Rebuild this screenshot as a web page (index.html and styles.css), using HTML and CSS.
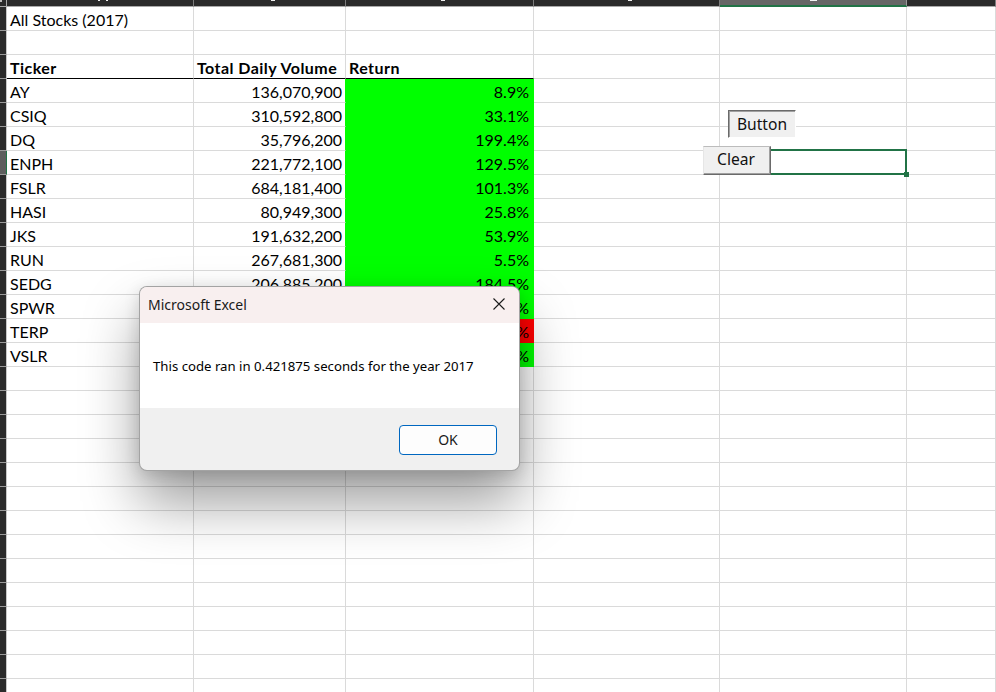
FILE: index.html
```html
<!DOCTYPE html>
<html>
<head>
<meta charset="utf-8">
<title>All Stocks (2017)</title>
<link rel="stylesheet" href="styles.css">
</head>
<body>
<div class="sheet">
  <div class="row top">
    <div class="ch corner"><span class="selall"></span></div>
    <div class="ch"><span class="mk mk-a"></span></div>
    <div class="ch"><span class="mk"></span></div>
    <div class="ch"><span class="mk"></span></div>
    <div class="ch"><span class="mk"></span></div>
    <div class="ch colsel"><span class="mk mk-e"></span></div>
    <div class="ch"></div>
  </div>
  <div class="row"><div class="rh"></div><div class="c">All Stocks (2017)</div><div class="c"></div><div class="c"></div><div class="c"></div><div class="c"></div><div class="c"></div></div>
  <div class="row"><div class="rh"></div><div class="c"></div><div class="c"></div><div class="c"></div><div class="c"></div><div class="c"></div><div class="c"></div></div>
  <div class="row"><div class="rh"></div><div class="c hd">Ticker</div><div class="c hd">Total Daily Volume</div><div class="c hd">Return</div><div class="c"></div><div class="c"></div><div class="c"></div></div>
  <div class="row"><div class="rh"></div><div class="c">AY</div><div class="c num fb">136,070,900</div><div class="c num g">8.9%</div><div class="c"></div><div class="c"></div><div class="c"></div></div>
  <div class="row"><div class="rh"></div><div class="c">CSIQ</div><div class="c num fb">310,592,800</div><div class="c num g">33.1%</div><div class="c"></div><div class="c"></div><div class="c"></div></div>
  <div class="row"><div class="rh"></div><div class="c">DQ</div><div class="c num fb">35,796,200</div><div class="c num g">199.4%</div><div class="c"></div><div class="c"></div><div class="c"></div></div>
  <div class="row"><div class="rh rsel"></div><div class="c">ENPH</div><div class="c num fb">221,772,100</div><div class="c num g">129.5%</div><div class="c"></div><div class="c active"><span class="handle"></span></div><div class="c"></div></div>
  <div class="row"><div class="rh"></div><div class="c">FSLR</div><div class="c num fb">684,181,400</div><div class="c num g">101.3%</div><div class="c"></div><div class="c"></div><div class="c"></div></div>
  <div class="row"><div class="rh"></div><div class="c">HASI</div><div class="c num fb">80,949,300</div><div class="c num g">25.8%</div><div class="c"></div><div class="c"></div><div class="c"></div></div>
  <div class="row"><div class="rh"></div><div class="c">JKS</div><div class="c num fb">191,632,200</div><div class="c num g">53.9%</div><div class="c"></div><div class="c"></div><div class="c"></div></div>
  <div class="row"><div class="rh"></div><div class="c">RUN</div><div class="c num fb">267,681,300</div><div class="c num g">5.5%</div><div class="c"></div><div class="c"></div><div class="c"></div></div>
  <div class="row"><div class="rh"></div><div class="c">SEDG</div><div class="c num fb">206,885,200</div><div class="c num g">184.5%</div><div class="c"></div><div class="c"></div><div class="c"></div></div>
  <div class="row"><div class="rh"></div><div class="c">SPWR</div><div class="c num fb"></div><div class="c num g">%</div><div class="c"></div><div class="c"></div><div class="c"></div></div>
  <div class="row"><div class="rh"></div><div class="c">TERP</div><div class="c num fr"></div><div class="c num r">%</div><div class="c"></div><div class="c"></div><div class="c"></div></div>
  <div class="row"><div class="rh"></div><div class="c">VSLR</div><div class="c num fb"></div><div class="c num g">%</div><div class="c"></div><div class="c"></div><div class="c"></div></div>
  <div class="row"><div class="rh"></div><div class="c"></div><div class="c"></div><div class="c"></div><div class="c"></div><div class="c"></div><div class="c"></div></div>
  <div class="row"><div class="rh"></div><div class="c"></div><div class="c"></div><div class="c"></div><div class="c"></div><div class="c"></div><div class="c"></div></div>
  <div class="row"><div class="rh"></div><div class="c"></div><div class="c"></div><div class="c"></div><div class="c"></div><div class="c"></div><div class="c"></div></div>
  <div class="row"><div class="rh"></div><div class="c"></div><div class="c"></div><div class="c"></div><div class="c"></div><div class="c"></div><div class="c"></div></div>
  <div class="row"><div class="rh"></div><div class="c"></div><div class="c"></div><div class="c"></div><div class="c"></div><div class="c"></div><div class="c"></div></div>
  <div class="row"><div class="rh"></div><div class="c"></div><div class="c"></div><div class="c"></div><div class="c"></div><div class="c"></div><div class="c"></div></div>
  <div class="row"><div class="rh"></div><div class="c"></div><div class="c"></div><div class="c"></div><div class="c"></div><div class="c"></div><div class="c"></div></div>
  <div class="row"><div class="rh"></div><div class="c"></div><div class="c"></div><div class="c"></div><div class="c"></div><div class="c"></div><div class="c"></div></div>
  <div class="row"><div class="rh"></div><div class="c"></div><div class="c"></div><div class="c"></div><div class="c"></div><div class="c"></div><div class="c"></div></div>
  <div class="row"><div class="rh"></div><div class="c"></div><div class="c"></div><div class="c"></div><div class="c"></div><div class="c"></div><div class="c"></div></div>
  <div class="row"><div class="rh"></div><div class="c"></div><div class="c"></div><div class="c"></div><div class="c"></div><div class="c"></div><div class="c"></div></div>
  <div class="row"><div class="rh"></div><div class="c"></div><div class="c"></div><div class="c"></div><div class="c"></div><div class="c"></div><div class="c"></div></div>
  <div class="row"><div class="rh"></div><div class="c"></div><div class="c"></div><div class="c"></div><div class="c"></div><div class="c"></div><div class="c"></div></div>
  <div class="row"><div class="rh"></div><div class="c"></div><div class="c"></div><div class="c"></div><div class="c"></div><div class="c"></div><div class="c"></div></div>
</div>

<button class="formbtn btn-run">Button</button>
<button class="formbtn btn-clear">Clear</button>

<div class="dialog">
  <div class="dlg-title">
    <span class="dlg-caption">Microsoft Excel</span>
    <svg class="dlg-close" width="12" height="12" viewBox="0 0 12 12"><path d="M0.5 0.5 L11.5 11.5 M11.5 0.5 L0.5 11.5" stroke="#1b1b1b" stroke-width="1.1" fill="none"/></svg>
  </div>
  <div class="dlg-body">This code ran in 0.421875 seconds for the year 2017</div>
  <div class="dlg-foot"><button class="ok">OK</button></div>
</div>
</body>
</html>
```

FILE: styles.css
```css
html, body {
  margin: 0;
  padding: 0;
}
body {
  width: 996px;
  height: 692px;
  overflow: hidden;
  position: relative;
  background: #ffffff;
}
.sheet {
  display: flex;
  flex-direction: column;
}
.row {
  display: grid;
  grid-template-columns: 7px 187px 152px 188px 186px 187px 1fr;
  grid-template-rows: 24px;
  height: 24px;
  flex: none;
}
.row.top {
  grid-template-rows: 7px;
  height: 7px;
}
.ch {
  box-sizing: border-box;
  height: 7px;
  background: #2b2b2b;
  border-right: 1px solid #7c7c7c;
  border-bottom: 1px solid #a9a9a9;
  display: flex;
  justify-content: center;
  align-items: flex-start;
}
.ch.corner {
  border-right: 1px solid #a9a9a9;
  justify-content: flex-start;
}
.selall {
  width: 2px;
  height: 2px;
  background: #bdbdbd;
}
.ch.colsel {
  background: #666666;
  border-bottom: 2px solid #217346;
  border-right-color: #9a9a9a;
}
.mk {
  width: 4px;
  height: 1px;
  background: #f2f2f2;
  margin-left: 6px;
}
.mk-a {
  width: 10px;
  background: transparent;
  border-left: 2px solid #f2f2f2;
  border-right: 2px solid #f2f2f2;
  box-sizing: border-box;
  margin-left: 6px;
}
.mk-e {
  width: 7px;
  margin-left: 0;
}
.rh {
  box-sizing: border-box;
  height: 24px;
  background: #2b2b2b;
  border-right: 1px solid #c8c8c8;
  border-bottom: 1px solid #9a9a9a;
}
.rh.rsel {
  background: #5e5e5e;
  border-right: 1px solid #217346;
}
.c {
  box-sizing: border-box;
  height: 24px;
  border-right: 1px solid #dadada;
  border-bottom: 1px solid #dadada;
  font-family: "Lato", "Open Sans", sans-serif;
  font-size: 16px;
  line-height: 25px;
  color: #000000;
  padding: 0 3px;
  white-space: nowrap;
}
.c.hd {
  font-weight: bold;
  letter-spacing: 0.45px;
  border-bottom-color: #000000;
}
.c.num {
  text-align: right;
}
.c.fb {
  border-right-color: #00ff00;
}
.c.fr {
  border-right-color: #ff0000;
}
.c.g {
  background: #00ff00;
  border-color: #00ff00;
  padding-right: 4px;
}
.c.r {
  background: #ff0000;
  border-color: #ff0000;
  padding-right: 4px;
}
.c.active {
  position: relative;
}
.c.active::after {
  content: "";
  position: absolute;
  left: -2px;
  top: -2px;
  right: -1px;
  bottom: -1px;
  border: 2px solid #217346;
}
.handle {
  position: absolute;
  right: -3px;
  bottom: -3px;
  width: 5px;
  height: 5px;
  background: #217346;
  z-index: 1;
}

/* form controls floating over the sheet */
.formbtn {
  position: absolute;
  box-sizing: border-box;
  margin: 0;
  padding: 0;
  background: #f0f0f0;
  font-family: "Noto Sans", "Open Sans", sans-serif;
  font-size: 15.6px;
  color: #111111;
  line-height: 1;
  z-index: 2;
}
.btn-run {
  left: 728px;
  top: 110px;
  width: 68px;
  height: 28px;
  border-top: 1px solid #6a6a6a;
  border-left: 1px solid #6a6a6a;
  border-right: 1px solid #ffffff;
  border-bottom: 1px solid #ffffff;
  box-shadow: inset 1px 1px 0 #a0a0a0;
  padding-top: 2px;
}
.btn-clear {
  left: 703px;
  top: 146px;
  width: 68px;
  height: 29px;
  border-top: 1px solid #bcbcbc;
  border-left: 1px solid #e6e6e6;
  border-right: 1px solid #6a6a6a;
  border-bottom: 1px solid #6a6a6a;
  box-shadow: inset -1px -1px 0 #a0a0a0;
  padding: 0 2px 2px 0;
}

/* message box */
.dialog {
  position: absolute;
  left: 139px;
  top: 286px;
  width: 381px;
  height: 185px;
  box-sizing: border-box;
  border: 1px solid rgba(0, 0, 0, 0.32);
  border-radius: 8px;
  overflow: hidden;
  display: flex;
  flex-direction: column;
  background: #f0f0f0;
  box-shadow: 0 32px 56px rgba(0, 0, 0, 0.38), 0 4px 16px rgba(0, 0, 0, 0.14);
  font-family: "Noto Sans", "Open Sans", sans-serif;
  color: #1a1a1a;
  z-index: 5;
}
.dlg-title {
  height: 36px;
  flex: none;
  background: #f8efef;
  display: flex;
  align-items: center;
  justify-content: space-between;
  padding: 0 14px 2px 8px;
  box-sizing: border-box;
}
.dlg-caption {
  font-size: 14px;
}
.dlg-body {
  height: 85px;
  flex: none;
  background: #ffffff;
  display: flex;
  align-items: center;
  padding-left: 13px;
  font-size: 13.2px;
  color: #000000;
}
.dlg-foot {
  flex: 1;
  display: flex;
  justify-content: flex-end;
  align-items: center;
  padding-right: 22px;
  padding-top: 1px;
}
.ok {
  width: 98px;
  height: 30px;
  box-sizing: border-box;
  margin: 0;
  border: 1px solid #0067c0;
  border-radius: 4px;
  background: #fdfdfd;
  font-family: "Noto Sans", "Open Sans", sans-serif;
  font-size: 14px;
  color: #1a1a1a;
}
```
